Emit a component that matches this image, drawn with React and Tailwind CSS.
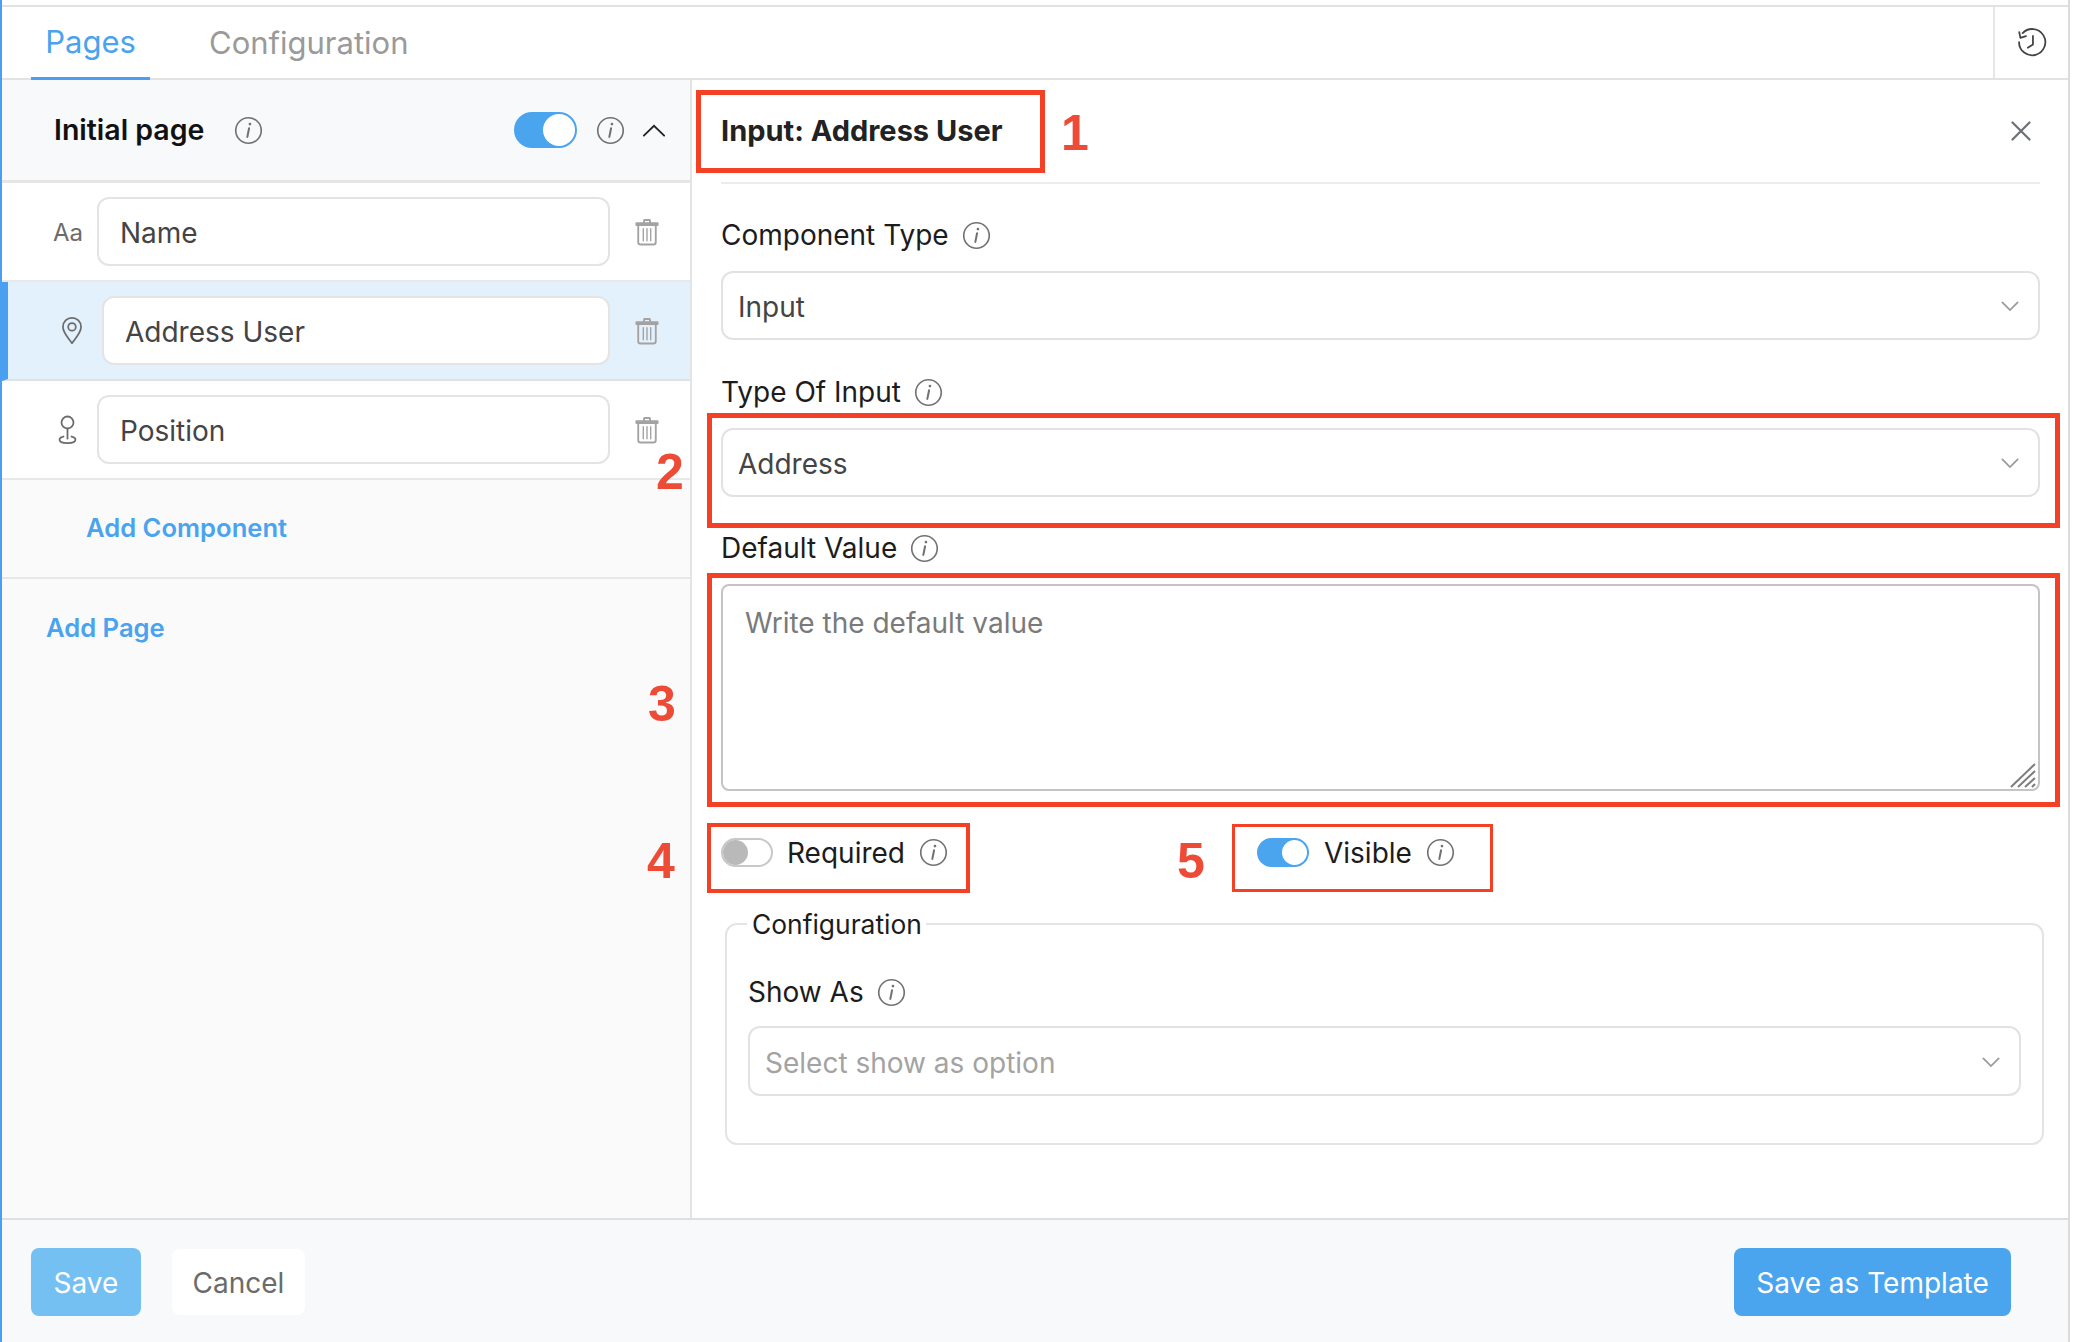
import React from "react";

const InfoIcon = ({ className = "" }) => (
  <svg viewBox="0 0 30 30" className={`w-[29px] h-[29px] shrink-0 ${className}`} fill="none" stroke="#727272">
    <circle cx="15" cy="15" r="13.2" strokeWidth="1.7" />
    <path d="M15.6 12.6 L13.8 21.6" strokeWidth="2.1" strokeLinecap="round" />
    <circle cx="16.5" cy="8.4" r="1.4" fill="#727272" stroke="none" />
  </svg>
);

const Chevron = ({ className = "" }) => (
  <svg viewBox="0 0 20 12" className={`w-[18px] h-[11px] ${className}`} fill="none" stroke="#9b9b9b" strokeWidth="2" strokeLinecap="round">
    <path d="M1.5 1.5 L10 10 L18.5 1.5" />
  </svg>
);

const Trash = () => (
  <svg viewBox="0 0 26 30" className="w-[24px] h-[28px]" fill="none" stroke="#a3a3a3" strokeWidth="2" strokeLinecap="round" strokeLinejoin="round">
    <path d="M1.5 5.5 H24.5 V7.5 H1.5 Z" />
    <path d="M9.5 5 L10 2 H16 L16.5 5" />
    <path d="M3.5 8 V26 Q3.5 28.5 6 28.5 H20 Q22.5 28.5 22.5 26 V8" />
    <path d="M9 11.5 V24.5 M13 11.5 V24.5 M17 11.5 V24.5" strokeWidth="1.5" />
  </svg>
);

const PinIcon = () => (
  <svg viewBox="0 0 24 32" className="w-[22px] h-[29px]" fill="none" stroke="#6b6b6b" strokeWidth="1.9" strokeLinejoin="round">
    <path d="M12 30 C7 23 2 18 2 12 A10 10 0 0 1 22 12 C22 18 17 23 12 30 Z" />
    <circle cx="12" cy="12" r="4.2" />
  </svg>
);

const PositionIcon = () => (
  <svg viewBox="0 0 20 32" className="w-[19px] h-[30px]" fill="none" stroke="#6b6b6b" strokeWidth="1.9">
    <circle cx="10" cy="8" r="6.4" />
    <path d="M10 14.5 V26" />
    <path d="M6.5 22.8 C3.5 23.4 1.5 24.6 1.5 26.4 C1.5 28.6 5 30 10 30 C15 30 18.5 28.6 18.5 26.4 C18.5 24.6 16.5 23.4 13.5 22.8" />
  </svg>
);

const HistoryIcon = () => (
  <svg viewBox="0 0 32 32" className="w-[30px] h-[30px]" fill="none" stroke="#444444" strokeWidth="1.9" strokeLinecap="round" strokeLinejoin="round">
    <path d="M6 5.5 A14 14 0 1 1 2.2 15" />
    <path d="M2.4 4.4 L3.6 10.6 L9.6 8.6" />
    <path d="M17 8.5 V17.5 L11.5 21" />
  </svg>
);

const Toggle = ({ on, large }) => (
  <div
    className={`flex items-center rounded-full border-2 ${large ? "w-[63px] h-[36px]" : "w-[52px] h-[29px]"} ${
      on ? "bg-[#4ba4ee] border-[#4ba4ee] justify-end" : "bg-white border-[#c8c8c8] justify-start"
    }`}
  >
    <div className={`rounded-full ${large ? "w-[32px] h-[32px]" : "w-[25px] h-[25px]"} ${on ? "bg-white" : "bg-[#b9b9b9]"}`} />
  </div>
);

const Label = ({ children }) => (
  <div className="flex items-center gap-[13px] h-[36px] text-[28px] text-[#1c1c1c]">
    {children}
    <InfoIcon />
  </div>
);

const SelectBox = ({ value, placeholder, className = "" }) => (
  <div className={`flex items-center justify-between rounded-[12px] border-2 border-[#e2e2e2] bg-white pl-[15px] pr-[19px] pt-[2px] ${className}`}>
    <span className={`pt-[1px] text-[28px] ${placeholder ? "text-[#a3a3a3]" : "text-[#444444]"}`}>{value || placeholder}</span>
    <Chevron />
  </div>
);

const components = [
  { name: "Name", icon: <span className="pt-[2px] text-[24px] text-[#6b6b6b]">Aa</span>, iconCls: "w-[95px] pl-[51px]" },
  { name: "Address User", icon: <PinIcon />, iconCls: "w-[94px] pl-[53px]", active: true },
  { name: "Position", icon: <PositionIcon />, iconCls: "w-[95px] pl-[56px] pt-[1px]" },
];

const ComponentRow = ({ item }) => (
  <div className={`flex items-center h-[99px] border-b-2 ${item.active ? "bg-[#e3f1fc] border-[#dfe3e6] border-l-[6px] border-l-[#4a9ff0]" : "bg-white border-[#e8e8e8]"}`}>
    <div className={`${item.iconCls} flex items-center shrink-0`}>{item.icon}</div>
    <div className="flex items-center flex-1 h-[69px] rounded-[12px] border-2 border-[#e4e4e4] bg-white pl-[21px] pt-[2px] text-[28px] text-[#444444]">
      {item.name}
    </div>
    <div className="w-[80px] flex justify-center shrink-0 pr-[6px]">
      <Trash />
    </div>
  </div>
);

const annotationNumbers = [
  { n: "1", cls: "left-[1061px] top-[103px]" },
  { n: "2", cls: "left-[656px] top-[442px]" },
  { n: "3", cls: "left-[648px] top-[674px]" },
  { n: "4", cls: "left-[647px] top-[831px]" },
  { n: "5", cls: "left-[1177px] top-[831px]" },
];

const annotationBoxes = [
  "left-[696px] top-[90px] w-[349px] h-[83px] border-[5px]",
  "left-[707px] top-[413px] w-[1353px] h-[115px] border-[5px]",
  "left-[707px] top-[573px] w-[1353px] h-[234px] border-[5px]",
  "left-[707px] top-[823px] w-[263px] h-[70px] border-[4px]",
  "left-[1232px] top-[824px] w-[261px] h-[68px] border-[3px]",
];

export default function App() {
  return (
    <div className="relative w-[2086px] h-[1342px] bg-white font-['Inter',sans-serif] overflow-hidden">
      <div className="flex flex-col w-[2070px] h-full pt-[5px] border-l-2 border-l-[#4a9ff0] border-r-2 border-r-[#dcdcdc]">
        {/* tabs */}
        <div className="flex h-[75px] border-y-2 border-[#e2e2e2] shrink-0">
          <div className="flex flex-1 pl-[29px] gap-[59px]">
            <div className="flex items-center justify-center w-[119px] border-b-[3px] border-[#4a9ff0] -mb-[2px] pt-[1px] text-[31px] text-[#4aa3ee]">Pages</div>
            <div className="flex items-center pt-[1px] text-[31px] text-[#9a9a9a]">Configuration</div>
          </div>
          <div className="flex items-center justify-center w-[75px] border-l-2 border-[#e6e6e6]">
            <HistoryIcon />
          </div>
        </div>

        <div className="flex flex-1 min-h-0">
          {/* left panel */}
          <div className="flex flex-col w-[690px] shrink-0 border-r-2 border-[#e4e4e4] bg-[#fafafa]">
            <div className="flex items-center h-[103px] pl-[52px] pr-[24px] bg-[#f7f9fa] border-b-[3px] border-[#e6e6e6] shrink-0">
              <span className="text-[28.5px] font-semibold text-[#111111]">Initial page</span>
              <InfoIcon className="ml-[30px]" />
              <div className="flex-1" />
              <Toggle on large />
              <InfoIcon className="ml-[19px]" />
              <svg viewBox="0 0 26 14" className="w-[24px] h-[13px] ml-[17px]" fill="none" stroke="#222222" strokeWidth="2" strokeLinecap="round">
                <path d="M2 12.5 L13 2 L24 12.5" />
              </svg>
            </div>
            {components.map((item) => (
              <ComponentRow key={item.name} item={item} />
            ))}
            <div className="flex items-center h-[99px] pl-[84px] border-b-2 border-[#e8e8e8] text-[25.6px] font-semibold text-[#4aa3ee]">Add Component</div>
            <div className="flex items-center h-[98px] pl-[44px] text-[25.6px] font-semibold text-[#4aa3ee]">Add Page</div>
          </div>

          {/* right panel */}
          <div className="flex-1 min-w-0 pl-[29px] pr-[28px]">
            <div className="flex items-center justify-between h-[104px] border-b-2 border-[#ececec]">
              <span className="text-[29px] font-bold text-[#222222]">Input: Address User</span>
              <svg viewBox="0 0 20 20" className="w-[20px] h-[20px] mr-[9px]" fill="none" stroke="#6b7075" strokeWidth="2.2" strokeLinecap="round">
                <path d="M1.5 1.5 L18.5 18.5 M18.5 1.5 L1.5 18.5" />
              </svg>
            </div>
            <div className="mt-[33px]">
              <Label>Component Type</Label>
              <SelectBox value="Input" className="h-[69px] mt-[18px]" />
            </div>
            <div className="mt-[34px]">
              <Label>Type Of Input</Label>
              <SelectBox value="Address" className="h-[69px] mt-[18px]" />
            </div>
            <div className="mt-[33px]">
              <Label>Default Value</Label>
              <div className="relative h-[207px] mt-[18px] rounded-[8px] border-2 border-[#c4c4c4] bg-white pl-[22px] pt-[16px] text-[28px] text-[#7a7a7a]">
                Write the default value
                <svg viewBox="0 0 26 25" className="absolute right-[2px] bottom-[1px] w-[26px] h-[25px]" fill="none" stroke="#7d7d7d" strokeWidth="2">
                  <path d="M1 24 L25 1 M8 24 L25 8 M15 24 L25 15 M22 24 L25 21" />
                </svg>
              </div>
            </div>
            <div className="flex items-center h-[29px] mt-[47px]">
              <Toggle />
              <span className="ml-[14px] text-[28px] text-[#1c1c1c]">Required</span>
              <InfoIcon className="ml-[14px]" />
              <div className="ml-[309px]">
                <Toggle on />
              </div>
              <span className="ml-[15px] text-[28px] text-[#1c1c1c]">Visible</span>
              <InfoIcon className="ml-[14px]" />
            </div>
            <fieldset className="ml-[4px] -mr-[4px] mt-[39px] rounded-[12px] border-2 border-[#e4e4e4] pl-[21px] pr-[21px] pb-[47px]">
              <legend className="ml-[-1px] pl-[5px] pr-[4px] h-[36px] leading-[36px] text-[26.4px] text-[#1c1c1c]">Configuration</legend>
              <div className="mt-[32px]">
                <Label>Show As</Label>
                <SelectBox placeholder="Select show as option" className="h-[70px] mt-[16px]" />
              </div>
            </fieldset>
          </div>
        </div>

        {/* footer */}
        <div className="flex items-center justify-between h-[124px] shrink-0 border-t-2 border-[#dfdfdf] bg-[#f7f9fa] pt-[1px] pl-[29px] pr-[57px]">
          <div className="flex items-center gap-[31px]">
            <div className="flex items-center justify-center w-[110px] h-[68px] rounded-[8px] bg-[#74c0f2] pt-[2px] text-[28px] text-white">Save</div>
            <div className="flex items-center justify-center w-[133px] h-[66px] rounded-[8px] bg-white pt-[2px] text-[28px] text-[#6b6b6b]">Cancel</div>
          </div>
          <div className="flex items-center justify-center w-[277px] h-[68px] rounded-[8px] bg-[#4ba4ee] pt-[2px] text-[28px] text-white">Save as Template</div>
        </div>
      </div>

      {/* red annotations */}
      {annotationBoxes.map((cls) => (
        <div key={cls} className={`absolute border-[#f44025] pointer-events-none ${cls}`} />
      ))}
      {annotationNumbers.map((a) => (
        <span key={a.n} className={`absolute font-['Liberation_Sans',sans-serif] font-bold text-[50px] leading-[60px] text-[#ee4b36] ${a.cls}`}>
          {a.n}
        </span>
      ))}
    </div>
  );
}
